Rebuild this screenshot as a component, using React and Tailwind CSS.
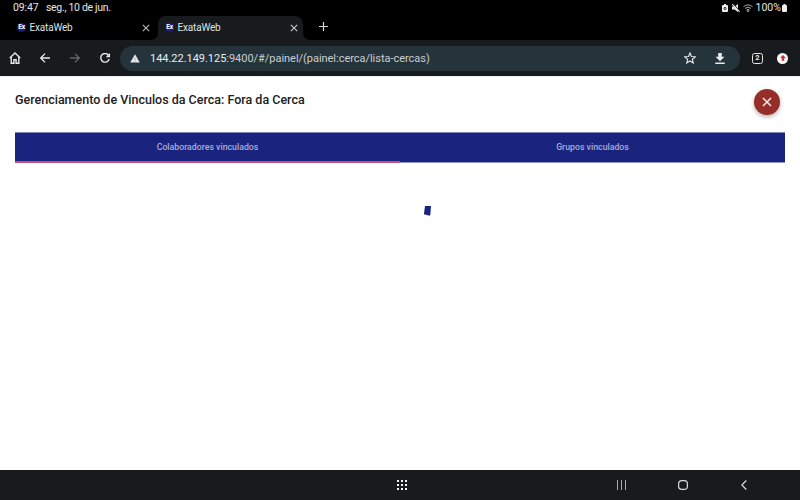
import React from "react";

const Favicon = () => (
  <span className="flex h-[9px] w-[9px] items-center justify-center rounded-full bg-[#201b78] text-[6.5px] font-bold leading-none tracking-[-0.2px] text-white">
    Ex
  </span>
);

const Cross = ({ className }) => (
  <svg className={className} viewBox="0 0 10 10" fill="none" stroke="currentColor">
    <path d="M1 1l8 8M9 1l-8 8" />
  </svg>
);

function StatusBar() {
  return (
    <div className="flex h-4 items-center bg-black pl-[13px] pr-[13px] text-[10.5px] leading-none text-[#e4e4e4]">
      <span className="w-[33px] whitespace-nowrap tracking-[-0.1px]">09:47</span>
      <span className="whitespace-nowrap tracking-[-0.31px]">seg., 10 de jun.</span>
      <div className="ml-auto flex items-center">
        <svg className="h-[8px] w-[6px]" viewBox="0 0 6 8">
          <path d="M2 0h2v1h1q1 0 1 1v5q0 1-1 1H1Q0 8 0 7V2q0-1 1-1h1z" fill="#eee" />
          <circle cx="3" cy="4.5" r="1.1" fill="none" stroke="#111" strokeWidth=".9" />
        </svg>
        <svg className="ml-[4px] h-[8px] w-[8px]" viewBox="0 0 8 8">
          <path d="M0 2.5h2.500L6 0v8L2.500 5.500H0z" fill="#e6e6e6" />
          <path d="M1.3 0L8 7" stroke="#000" strokeWidth="1" />
          <path d="M.3 .2L7.6 7.8" stroke="#eee" strokeWidth="1.1" />
        </svg>
        <svg className="ml-[3px] h-[8px] w-[10px]" viewBox="0 0 10 8" fill="none" stroke="#bbb" strokeWidth=".9">
          <path d="M.5 2.7Q5-1 9.5 2.7M2 4.4Q5 2 8 4.4M3.5 6Q5 4.8 6.5 6" />
          <circle cx="5" cy="7" r=".5" fill="#ddd" />
        </svg>
        <span className="ml-[2.5px] w-[26.500px] whitespace-nowrap">100%</span>
        <svg className="h-[8px] w-[5px]" viewBox="0 0 5 8" fill="#eee">
          <path d="M1.5 0h2v1H4q1 0 1 1v5q0 1-1 1H1Q0 8 0 7V2q0-1 1-1h.5z" />
        </svg>
      </div>
    </div>
  );
}

function TabStrip() {
  return (
    <div className="flex h-6 bg-black text-[10px] leading-none text-[#dfe1e3]">
      <div className="flex w-[150px] items-center pb-[1px] pl-[17px]">
        <Favicon />
        <span className="ml-[3.5px] tracking-[-0.18px]">ExataWeb</span>
        <Cross className="ml-auto h-[8px] w-[8px] text-[#b5b8ba] [stroke-width:1.4]" />
      </div>
      <svg className="h-6 w-2 text-[#171b1e]" viewBox="0 0 8 24" fill="currentColor">
        <path d="M0 24Q8 24 8 16v8z" />
      </svg>
      <div className="flex w-[145px] items-center rounded-t-[8px] bg-[#171b1e] pb-[1px] pl-[7px] pr-[5px]">
        <Favicon />
        <span className="ml-[3.5px] tracking-[-0.18px]">ExataWeb</span>
        <Cross className="ml-auto h-[8px] w-[8px] text-[#c5c8ca] [stroke-width:1.4]" />
      </div>
      <svg className="h-6 w-2 text-[#171b1e]" viewBox="0 0 8 24" fill="currentColor">
        <path d="M8 24Q0 24 0 16v8z" />
      </svg>
      <svg className="ml-[8px] mt-[6px] h-[9px] w-[9px]" viewBox="0 0 9 9" stroke="#d5d7d9" strokeWidth="1.2">
        <path d="M4.5 0v9M0 4.5h9" />
      </svg>
    </div>
  );
}

function Toolbar() {
  return (
    <div className="flex h-9 items-center bg-[#171b1e] pl-[9px] text-[#e6e8ea]">
      <svg className="h-3 w-3" viewBox="0 0 12 12" fill="none" stroke="currentColor" strokeWidth="1.4">
        <path d="M.8 6L6 1l5.200 5M2.200 5v6.300h2.700V7.700h2.200v3.600h2.700V5" />
      </svg>
      <svg className="ml-[19px] h-[10px] w-[10px]" viewBox="0 0 10 10" fill="none" stroke="currentColor" strokeWidth="1.35">
        <path d="M10 5H.8M5 .6L.7 5 5 9.400" />
      </svg>
      <svg className="ml-[20px] h-[10px] w-[10px] text-[#62666a]" viewBox="0 0 10 10" fill="none" stroke="currentColor" strokeWidth="1.3">
        <path d="M0 5h9.200M5 .6L9.300 5 5 9.400" />
      </svg>
      <svg className="ml-[20px] h-[10px] w-[10px]" viewBox="0 0 10 10" fill="none" stroke="currentColor" strokeWidth="1.4">
        <path d="M8.700 2.500A4.300 4.300 0 1 0 9.200 6" />
        <path d="M10 0v4.300H5.700z" fill="currentColor" stroke="none" />
      </svg>
      <div className="ml-[10px] flex h-[25px] w-[620px] items-center rounded-full bg-[#25343b] pl-[10px] pr-[15px]">
        <svg className="h-[9px] w-[10px]" viewBox="0 0 10 9">
          <path d="M5 .3L9.800 8.500H.2z" fill="#e3e6e8" />
          <path d="M5 3.800v2M5 6.600v.8" stroke="#7d888d" strokeWidth=".7" />
        </svg>
        <span className="ml-[10px] whitespace-nowrap text-[11px] leading-none tracking-[-0.03px] text-[#c9ced1]">
          <span className="text-[#e9ecee]">144.22.149.125</span>:9400/#/painel/(painel:cerca/lista-cercas)
        </span>
        <svg className="ml-auto h-3 w-3" viewBox="0 0 12 12" fill="none" stroke="currentColor" strokeWidth="1.1">
          <path d="M6 1l1.450 3.500 3.800.300-2.900 2.500.900 3.700L6 9l-3.250 2 .900-3.700L.750 4.800l3.800-.300z" />
        </svg>
        <svg className="ml-[19px] h-[11px] w-[10px]" viewBox="0 0 10 11" fill="currentColor">
          <path d="M3.200 0h3.600v3.800h2.700L5 8.200.5 3.800h2.700zM.3 9.400h9.400V11H.3z" />
        </svg>
      </div>
      <div className="ml-[12px] flex h-[11px] w-[11px] items-center justify-center rounded-[2.5px] border border-[#e6e8ea] text-[7.5px] font-bold leading-none">
        2
      </div>
      <div className="ml-[14px] flex h-[11px] w-[11px] items-center justify-center rounded-full bg-white">
        <svg className="h-[6px] w-[6px]" viewBox="0 0 6 6" fill="#c9333a">
          <path d="M3 0l3 3H4.300v2.800H1.700V3H0z" />
        </svg>
      </div>
    </div>
  );
}

function Page() {
  return (
    <main className="h-[394px] border-t border-[#e9f1f7] bg-white px-[15px]">
      <div className="flex h-[55px] items-start justify-between pr-[5px]">
        <h1 className="mt-[15px] whitespace-nowrap text-[12.5px] font-medium leading-4 text-[#202020]">
          Gerenciamento de Vinculos da Cerca: Fora da Cerca
        </h1>
        <button className="mt-[12px] flex h-[26px] w-[26px] items-center justify-center rounded-full bg-[#962d28] text-[#f5e9e8] shadow-[0_2px_4px_rgba(0,0,0,0.3)]">
          <Cross className="h-[10px] w-[10px] [stroke-width:1.6]" />
        </button>
      </div>
      <div className="flex h-[31px] border-y border-t-[#8186b8] border-b-[#8f96c8] bg-[#1a237e] text-[8.750px] font-medium leading-none text-[#a9addb]">
        <div className="-mb-px flex w-1/2 items-center justify-center border-b-2 border-[#c0507a]">
          <span className="whitespace-nowrap">Colaboradores vinculados</span>
        </div>
        <div className="flex w-1/2 items-center justify-center">
          <span className="whitespace-nowrap">Grupos vinculados</span>
        </div>
      </div>
      <svg className="ml-[408px] mt-[43px] h-[11px] w-[10px]" viewBox="0 0 10 11" fill="#1a237e">
        <path d="M2 0h6l-.6 8.200-.7 1.600L.9 8.200z" />
      </svg>
    </main>
  );
}

function NavigationBar() {
  const dots = [0, 4, 8];
  return (
    <div className="flex h-[30px] items-center bg-[#171b1e] pl-[397px] text-[#d8dadc]">
      <svg className="h-[10px] w-[10px]" viewBox="0 0 10 10" fill="#f3f4f4">
        {dots.map((y) => dots.map((x) => <rect key={`${x}-${y}`} x={x} y={y} width="2" height="2" />))}
      </svg>
      <svg className="ml-[210px] h-[10px] w-[9px]" viewBox="0 0 9 10" stroke="#a9acae">
        <path d="M.5 0v10M4.500 0v10M8.500 0v10" />
      </svg>
      <svg className="ml-[52px] h-[10px] w-[10px]" viewBox="0 0 10 10" fill="none" stroke="currentColor" strokeWidth="1.2">
        <rect x=".6" y=".6" width="8.800" height="8.800" rx="3.2" />
      </svg>
      <svg className="ml-[53px] h-[10px] w-[6px]" viewBox="0 0 6 10" fill="none" stroke="currentColor" strokeWidth="1.2">
        <path d="M5.300.5L.8 5l4.500 4.500" />
      </svg>
    </div>
  );
}

export default function App() {
  return (
    <div className="h-[500px] w-[800px] overflow-hidden bg-black font-['Roboto',sans-serif]">
      <StatusBar />
      <TabStrip />
      <Toolbar />
      <Page />
      <NavigationBar />
    </div>
  );
}
